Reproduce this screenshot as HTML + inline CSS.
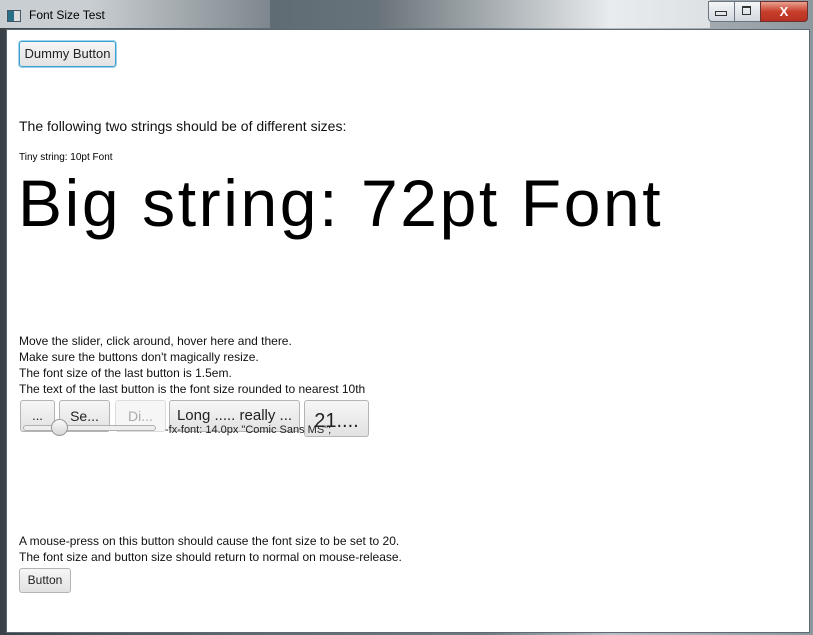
<!DOCTYPE html>
<html><head><style>
body{margin:0;width:813px;height:635px;overflow:hidden;background:linear-gradient(90deg,#3a4248 0%,#4a555c 10%,#5d6a72 30%,#6f7b83 60%,#b8bec2 75%,#8d979e 100%);font-family:"Liberation Sans",sans-serif;position:relative}
.a{position:absolute;white-space:nowrap}
#content{position:absolute;left:6px;top:29px;width:802px;height:602px;background:#fff;border:1px solid #5d6a74}
.t{font-size:12px;color:#111}
.btn{position:absolute;border:1px solid #b4b4b4;border-radius:3px;background:linear-gradient(#f6f6f6,#e2e2e2);font-size:13px;color:#222;text-align:center;box-sizing:border-box}
</style></head><body>
<div class="a" style="left:0;top:0;width:90px;height:28px;background:#c9ced2"></div>
<div class="a" style="left:90px;top:0;width:180px;height:28px;background:linear-gradient(90deg,#c9ced2,#7d878d)"></div>
<div class="a" style="left:380px;top:0;width:330px;height:28px;background:linear-gradient(90deg,#6a747a,#e9ecee 70%,#dde1e3)"></div>
<div class="a" style="left:7px;top:10px;width:12px;height:10px;border:1px solid #456;background:linear-gradient(90deg,#2a6f8a 50%,#ddd 50%)"></div>
<div class="a" style="left:29px;top:8px;font-size:12px;color:#000">Font Size Test</div>
<div class="a" style="left:708px;top:1px;width:26px;height:19px;border:1px solid #6b7680;border-radius:0 0 0 4px;background:linear-gradient(#f4f6f8,#d2d8de)"></div>
<div class="a" style="left:715px;top:11px;width:10px;height:3px;border:1px solid #333"></div>
<div class="a" style="left:734px;top:1px;width:25px;height:19px;border:1px solid #6b7680;background:linear-gradient(#f4f6f8,#d2d8de)"></div>
<div class="a" style="left:742px;top:6px;width:7px;height:6px;border:1px solid #333;border-top-width:2px"></div>
<div class="a" style="left:760px;top:1px;width:46px;height:19px;border:1px solid #6b3030;border-radius:0 0 4px 0;background:linear-gradient(#e8a090,#c8402c 50%,#b83020);color:#fff;font-weight:bold;font-size:13px;text-align:center;line-height:19px">X</div>
<div id="content"></div>
<div class="btn" style="left:19px;top:41px;width:97px;height:26px;line-height:24px;border:1px solid #3aa0d0;box-shadow:0 0 0 1px #9fd4ec">Dummy Button</div>
<div class="a t" style="left:19px;top:118px;font-size:14px">The following two strings should be of different sizes:</div>
<div class="a" style="left:19px;top:152px;font-size:10px">Tiny string: 10pt Font</div>
<div class="a" style="left:18px;top:165px;font-size:66px;color:#000;letter-spacing:2.6px">Big string: 72pt Font</div>
<div class="a t" style="left:19px;top:333px;line-height:16px">Move the slider, click around, hover here and there.<br>Make sure the buttons don't magically resize.<br>The font size of the last button is 1.5em.<br>The text of the last button is the font size rounded to nearest 10th</div>
<div class="btn" style="left:20px;top:400px;width:35px;height:32px;line-height:30px">...</div>
<div class="btn" style="left:59px;top:400px;width:51px;height:32px;line-height:30px;font-size:14px">Se...</div>
<div class="btn" style="left:115px;top:400px;width:51px;height:32px;line-height:30px;font-size:14px;color:#aaa;border-color:#ddd;background:#f6f6f6">Di...</div>
<div class="btn" style="left:169px;top:400px;width:131px;height:32px;line-height:30px;font-size:15px">Long ..... really ...</div>
<div class="btn" style="left:304px;top:400px;width:65px;height:37px;line-height:40px;font-size:20px">21....</div>
<div class="a" style="left:23px;top:425px;width:131px;height:4px;border:1px solid #b0b0b0;border-radius:3px;background:#eee"></div>
<div class="a" style="left:51px;top:419px;width:15px;height:15px;border:1px solid #999;border-radius:50%;background:linear-gradient(#fafafa,#d8d8d8)"></div>
<div class="a" style="left:165px;top:424px;font-size:11px;color:#222">-fx-font: 14.0px "Comic Sans MS";</div>
<div class="a t" style="left:19px;top:533px;line-height:16px">A mouse-press on this button should cause the font size to be set to 20.<br>The font size and button size should return to normal on mouse-release.</div>
<div class="btn" style="left:19px;top:568px;width:52px;height:25px;line-height:23px;font-size:12px">Button</div>
</body></html>
